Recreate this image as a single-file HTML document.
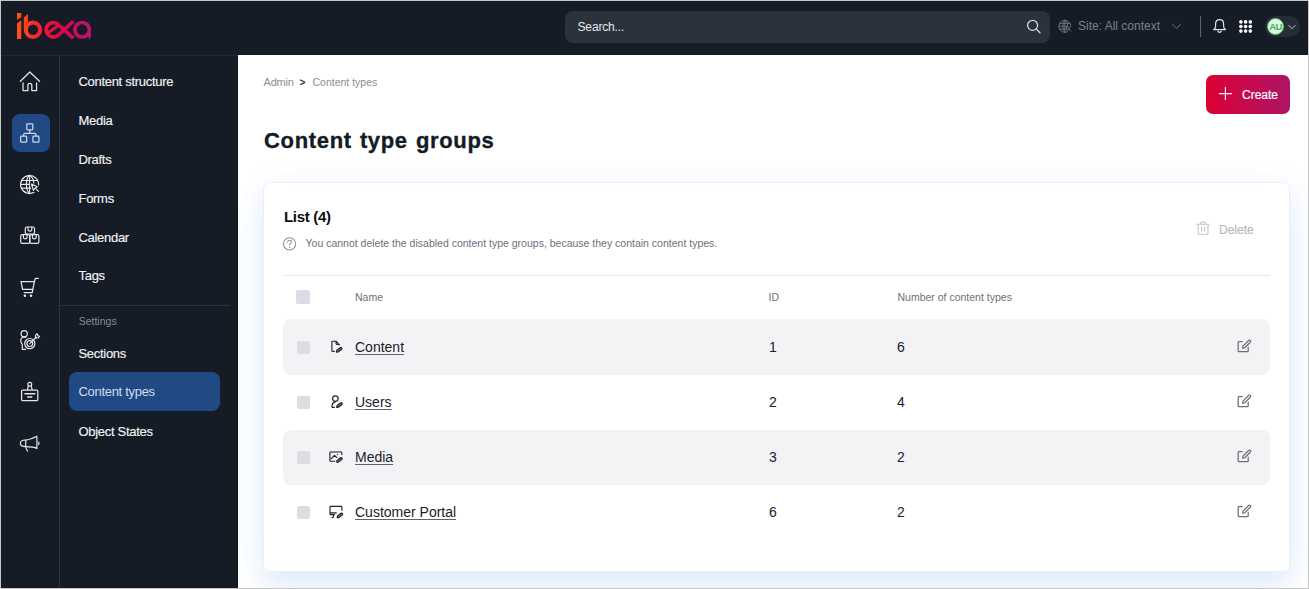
<!DOCTYPE html>
<html><head><meta charset="utf-8">
<style>
*{box-sizing:border-box;margin:0;padding:0}
html,body{width:1309px;height:589px;overflow:hidden;background:#fff}
body{position:relative;font-family:"Liberation Sans",sans-serif}
.a{position:absolute}
.t{position:absolute;white-space:nowrap;font-family:"Liberation Sans",sans-serif}
#frame{left:0;top:0;width:1309px;height:589px;border:1px solid #c6c6c6;z-index:50;pointer-events:none}
#hdr{left:1px;top:1px;width:1307px;height:54px;background:#151c26}
#side1{left:1px;top:55px;width:59px;height:533px;background:#151c26;border-right:1px solid #2b323c}
#side2{left:60px;top:55px;width:178px;height:533px;background:#151c26;border-top:1px solid #232a34;border-right:1px solid #10161d}
#s1top{left:1px;top:55px;width:59px;height:1px;background:#232a34}
#main{left:238px;top:55px;width:1070px;height:533px;background:#fff;overflow:hidden}
.rt{font-size:14px;line-height:14px;color:#1a212b;text-decoration:underline;text-decoration-color:#5d636b;text-underline-offset:2px;text-decoration-thickness:1px}
.rv{font-size:14px;line-height:14px;color:#1a212b}
.mi{font-size:13px;line-height:13px;color:#f2f2f4;letter-spacing:-0.3px;-webkit-text-stroke:0.15px #f2f2f4}
</style></head><body>
<div id="frame" class="a"></div>
<div id="hdr" class="a"></div>
<div id="side1" class="a"></div>
<div id="side2" class="a"></div>
<div id="s1top" class="a"></div>
<div id="main" class="a"></div>

<!-- header -->
<div class="a" style="left:565px;top:11px;width:485px;height:32px;background:#2b323c;border-radius:8px"></div>
<div class="t" style="left:577.5px;top:21px;font-size:12px;line-height:12px;color:#e6e6ea;letter-spacing:-0.15px">Search...</div>
<div class="t" style="left:1078px;top:19.8px;font-size:12px;line-height:12px;color:#7b8087">Site: All context</div>
<div class="a" style="left:1200px;top:16px;width:1px;height:21px;background:#5f656d"></div>
<div class="a" style="left:1265px;top:16px;width:35px;height:21px;background:#262d37;border-radius:11px"></div>
<div class="a" style="left:1267px;top:18px;width:17px;height:17px;background:#e3f6e6;border:1.5px solid #47c263;border-radius:50%"></div>
<div class="t" style="left:1268px;top:22.3px;width:15px;text-align:center;font-size:9.5px;line-height:9.5px;font-weight:700;color:#3ab552;letter-spacing:-0.6px">AU</div>

<!-- sidebar 1 active -->
<div class="a" style="left:12px;top:114px;width:38px;height:38px;background:#214a85;border-radius:8px"></div>

<!-- sidebar 2 -->
<div class="t mi" style="left:78.5px;top:74.5px">Content structure</div>
<div class="t mi" style="left:78.5px;top:113.5px">Media</div>
<div class="t mi" style="left:78.5px;top:152.5px">Drafts</div>
<div class="t mi" style="left:78.5px;top:191.5px">Forms</div>
<div class="t mi" style="left:78.5px;top:230.5px">Calendar</div>
<div class="t mi" style="left:78.5px;top:268.5px">Tags</div>
<div class="a" style="left:60px;top:305px;width:170px;height:1px;background:#2b323c"></div>
<div class="t" style="left:78.7px;top:315.5px;font-size:10.5px;line-height:11px;color:#878b91">Settings</div>
<div class="t mi" style="left:78.5px;top:346.5px">Sections</div>
<div class="a" style="left:69px;top:372.3px;width:151px;height:38.7px;background:#214a85;border-radius:8px"></div>
<div class="t mi" style="left:78.5px;top:384.8px;color:#cfdcf0;-webkit-text-stroke:0">Content types</div>
<div class="t mi" style="left:78.5px;top:424.5px">Object States</div>

<!-- main content -->
<div class="t" style="left:263.5px;top:76.8px;font-size:11px;line-height:11px;color:#8a8e94;letter-spacing:-0.2px">Admin</div>
<div class="t" style="left:299.5px;top:77px;font-size:10px;line-height:11px;font-weight:700;color:#2d3340">&gt;</div>
<div class="t" style="left:312.5px;top:77px;font-size:10.5px;line-height:11px;color:#8a8e94">Content types</div>
<div class="t" style="left:264px;top:130.1px;font-size:22px;line-height:22px;font-weight:700;color:#131c26;letter-spacing:0.66px;word-spacing:1.4px;-webkit-text-stroke:0.35px #131c26">Content type groups</div>

<div class="a" style="left:1206px;top:75px;width:84px;height:38.5px;border-radius:7px;background:linear-gradient(90deg,#dc0035,#ad1565)"></div>
<div class="t" style="left:1242px;top:89px;font-size:12px;line-height:12px;color:#fff;-webkit-text-stroke:0.2px #fff">Create</div>

<!-- card -->
<div class="a" style="left:263px;top:182px;width:1027px;height:390px;background:#fff;border:1px solid #eceef4;border-radius:7px;box-shadow:0 18px 30px rgba(60,135,240,0.13),0 0 28px rgba(60,135,240,0.06)"></div>
<div class="t" style="left:284px;top:208.6px;font-size:15px;line-height:15px;font-weight:700;color:#0c0f14;letter-spacing:-0.3px">List (4)</div>
<div class="t" style="left:305.5px;top:238px;font-size:10.5px;line-height:11px;color:#6c7178">You cannot delete the disabled content type groups, because they contain content types.</div>
<div class="t" style="left:1219px;top:223.6px;font-size:12px;line-height:12px;color:#b5b8bd;-webkit-text-stroke:0.15px #b5b8bd">Delete</div>
<div class="a" style="left:283px;top:275px;width:987px;height:1px;background:#e6e7eb"></div>

<div class="a" style="left:296px;top:290px;width:14px;height:14px;background:#dcdce5;border-radius:2px"></div>
<div class="t" style="left:355px;top:292px;font-size:10.5px;line-height:11px;color:#6c7178">Name</div>
<div class="t" style="left:768.5px;top:292px;font-size:10.5px;line-height:11px;color:#6c7178">ID</div>
<div class="t" style="left:897.5px;top:292px;font-size:10.5px;line-height:11px;color:#6c7178">Number of content types</div>

<!-- rows -->
<div class="a" style="left:283px;top:319px;width:987px;height:55.5px;background:#f3f3f5;border-radius:8px"></div>
<div class="a" style="left:283px;top:429.5px;width:987px;height:55px;background:#f3f3f5;border-radius:8px"></div>
<!-- row content -->
<div class="a" style="left:296.5px;top:340.5px;width:13.5px;height:13.5px;background:#dcdce5;border-radius:2px"></div>
<div class="t rt" style="left:355px;top:340px">Content</div>
<div class="t rv" style="left:769px;top:340px">1</div>
<div class="t rv" style="left:897px;top:340px">6</div>
<div class="a" style="left:296.5px;top:395.5px;width:13.5px;height:13.5px;background:#dcdce5;border-radius:2px"></div>
<div class="t rt" style="left:355px;top:395px">Users</div>
<div class="t rv" style="left:769px;top:395px">2</div>
<div class="t rv" style="left:897px;top:395px">4</div>
<div class="a" style="left:296.5px;top:450.5px;width:13.5px;height:13.5px;background:#dcdce5;border-radius:2px"></div>
<div class="t rt" style="left:355px;top:450px">Media</div>
<div class="t rv" style="left:769px;top:450px">3</div>
<div class="t rv" style="left:897px;top:450px">2</div>
<div class="a" style="left:296.5px;top:505.5px;width:13.5px;height:13.5px;background:#dcdce5;border-radius:2px"></div>
<div class="t rt" style="left:355px;top:505px">Customer Portal</div>
<div class="t rv" style="left:769px;top:505px">6</div>
<div class="t rv" style="left:897px;top:505px">2</div>
<svg class="a" style="left:0;top:0;z-index:20" width="1309" height="589" viewBox="0 0 1309 589">
<defs>
<linearGradient id="lg" gradientUnits="userSpaceOnUse" x1="17" y1="0" x2="91" y2="0">
<stop offset="0" stop-color="#ff5214"/><stop offset="0.38" stop-color="#f2153a"/><stop offset="0.6" stop-color="#dc0548"/><stop offset="1" stop-color="#b91470"/>
</linearGradient>
</defs>
<!-- logo -->
<defs><clipPath id="cx"><rect x="40" y="20.6" width="60" height="18.3"/></clipPath></defs>
<g fill="url(#lg)" stroke="none">
<polygon points="17,13.1 21.3,13.1 21.3,17.2 17,19.7"/>
<polygon points="17,23.4 21.3,20.3 21.3,39 17,39"/>
<polygon points="23.75,17.6 27.95,13.8 27.95,29.8 23.75,29.8"/>
</g>
<g fill="none" stroke="url(#lg)" stroke-width="4.1">
<circle cx="33" cy="29.75" r="7.2"/>
</g>
<g fill="none" stroke="url(#lg)" clip-path="url(#cx)">
<path d="M59 25.1 A7.25 7.25 0 1 0 58.6 34.9 L73.4 21.2" stroke-width="3.7"/>
<path d="M59.3 24.8 L47.9 32.9" stroke-width="3.1"/>
<path d="M59.6 25.6 L73.4 38.4" stroke-width="3.7"/>
<circle cx="82.1" cy="29.75" r="7.25" stroke-width="3.7"/>
</g>
<path d="M88 34.5 L90.9 32 L90.9 36.5 L89 39.9 Z" fill="url(#lg)"/>

<!-- sidebar icons -->
<g fill="none" stroke="#e6e6e8" stroke-width="1.25" stroke-linecap="round" stroke-linejoin="round">
<path d="M20.4 81.3 L29.8 72 L39.5 81.3"/>
<path d="M23 82.9 V90.5 H27.9 V85.3 A1.95 1.95 0 0 1 31.8 85.3 V90.5 H36.6 V82.9"/>
</g>
<g fill="none" stroke="#c9d7ee" stroke-width="1.25" stroke-linecap="round" stroke-linejoin="round">
<rect x="26.8" y="123.9" width="6" height="6" rx="0.8"/>
<path d="M29.75 129.9 V133.3 M23.65 136.2 V134.6 Q23.65 133.3 24.9 133.3 H34.6 Q35.9 133.3 35.9 134.6 V136.2"/>
<rect x="20.65" y="136.2" width="6" height="6" rx="0.8"/>
<rect x="32.9" y="136.2" width="6" height="6" rx="0.8"/>
</g>
<g fill="none" stroke="#e6e6e8" stroke-width="1.2" stroke-linecap="round" stroke-linejoin="round">
<path d="M34.1 192.3 A9 9 0 1 1 38.6 184.9"/>
<path d="M29.6 175.3 C25.4 178 25.4 190.6 29.6 193.3 M29.6 175.3 C33.6 178 33.9 182 33.7 184.3"/>
<path d="M29.6 175.3 V193.3"/>
<path d="M21.6 180.5 H37.6 M20.6 184.3 H30.5 M21.6 188.1 H31.5"/>
<path d="M31.4 184 L37.3 186.8 L35.2 188 L33.4 190.4 Z M35.3 188.1 L38.5 191.4" stroke="#151c26" stroke-width="3" fill="#151c26"/><path d="M31.4 184 L37.3 186.8 L35.2 188 L33.4 190.4 Z M35.3 188.1 L38.5 191.4"/>
</g>
<g fill="none" stroke="#e6e6e8" stroke-width="1.2" stroke-linecap="round" stroke-linejoin="round">
<rect x="25.3" y="227" width="9.2" height="7" rx="1.6"/>
<path d="M28 227 V229.6 Q28 231.2 29.9 231.2 Q31.8 231.2 31.8 229.6 V227"/>
<rect x="20.7" y="234.6" width="9.1" height="8.8" rx="1.6"/>
<path d="M23.4 234.6 V237.2 Q23.4 238.8 25.25 238.8 Q27.1 238.8 27.1 237.2 V234.6"/>
<rect x="29.8" y="234.6" width="9.1" height="8.8" rx="1.6"/>
<path d="M32.5 234.6 V237.2 Q32.5 238.8 34.35 238.8 Q36.2 238.8 36.2 237.2 V234.6"/>
</g>
<g fill="none" stroke="#e6e6e8" stroke-width="1.25" stroke-linecap="round" stroke-linejoin="round">
<path d="M21 281.7 H34.4 L32.8 289.3 H22.6 Z"/>
<path d="M34.4 281.7 L35.1 279 Q35.3 278.4 36 278.4 H38.3"/>
<path d="M32.8 289.3 L32.2 292.6 H24.2"/>
</g>
<circle cx="24.9" cy="295.7" r="1.3" fill="#e6e6e8"/><circle cx="31" cy="295.7" r="1.3" fill="#e6e6e8"/>
<g fill="none" stroke="#e6e6e8" stroke-width="1.2" stroke-linecap="round" stroke-linejoin="round">
<circle cx="24.2" cy="333.7" r="3.1"/>
<path d="M22.6 337.3 Q20.6 338.5 20.7 340.5 Q20.8 342.6 22.3 344.3 V349.4 H25.6 M23.2 337.2 H26"/>
<circle cx="29.8" cy="343.6" r="5.1"/>
<circle cx="29.8" cy="343.6" r="2.9"/>
<path d="M29.8 343.6 L36.3 337.1"/>
<path d="M35.4 338 L35.6 335.2 L37.1 333.7 L37.9 335.7 L39.5 336.3 L38.2 337.8 Z"/>
</g>
<g fill="none" stroke="#e6e6e8" stroke-width="1.25" stroke-linecap="round" stroke-linejoin="round">
<rect x="21.6" y="390" width="16.2" height="10.6" rx="1"/>
<path d="M24.9 393.8 H34.8 M27.7 396.9 H31.8" stroke-width="1.5"/>
<circle cx="29.8" cy="384.3" r="1.9"/>
<path d="M28.4 385.8 L27.5 389.6 M31.2 385.8 L32.1 389.6"/>
</g>
<g fill="none" stroke="#e6e6e8" stroke-width="1.2" stroke-linecap="round" stroke-linejoin="round">
<path d="M25.7 440 C29.3 440 33 438.2 36.9 436.3 V448.4 C33 446.5 29.3 446.6 25.7 446.6"/>
<path d="M25.7 440 C22 440 20.3 441.5 20.3 443.3 C20.3 445.1 22 446.6 25.7 446.6"/>
<path d="M25.7 440 V446.8 Q26 449.4 27.6 451"/>
</g>
<rect x="37.9" y="441.6" width="1.6" height="3.4" fill="#b9b9bc"/>

<!-- header icons -->
<g fill="none" stroke="#d6d7db" stroke-width="1.3" stroke-linecap="round">
<circle cx="1032.6" cy="25.3" r="5"/>
<path d="M1036.3 29 L1040 32.7"/>
</g>
<g fill="none" stroke="#6c7178" stroke-width="1" stroke-linecap="round" stroke-linejoin="round">
<path d="M1067.5 31.8 A6 6 0 1 1 1070.9 26.6"/>
<path d="M1064.9 20.2 C1062.2 22 1062.2 30.4 1064.9 32.2 M1064.9 20.2 C1067.4 22 1067.7 24.5 1067.6 26.2 M1064.9 20.2 V32.2"/>
<path d="M1059.6 23.4 H1070 M1058.9 26.2 H1065.6 M1059.6 29 H1066.3"/>
<path d="M1066.4 26.3 L1069.9 28 L1068.7 28.8 L1067.6 30.3 Z M1068.8 28.9 L1070.9 31"/>
<path d="M1172.4 24.1 L1176.6 28.3 L1180.8 24.1"/>
</g>
<g fill="none" stroke="#e2e2e6" stroke-width="1.2" stroke-linejoin="round" stroke-linecap="round">
<path d="M1213.7 29.6 H1225.5 Q1223.8 28.7 1223.6 26.2 V24.1 Q1223.6 19.7 1219.6 19.7 Q1215.6 19.7 1215.6 24.1 V26.2 Q1215.4 28.7 1213.7 29.6 Z"/>
<path d="M1218 31.3 Q1219.6 33.3 1221.2 31.3"/>
</g>
<g fill="#ffffff">
<circle cx="1240.9" cy="21.9" r="1.8"/><circle cx="1245.6" cy="21.9" r="1.8"/><circle cx="1250.3" cy="21.9" r="1.8"/>
<circle cx="1240.9" cy="26.5" r="1.8"/><circle cx="1245.6" cy="26.5" r="1.8"/><circle cx="1250.3" cy="26.5" r="1.8"/>
<circle cx="1240.9" cy="31.1" r="1.8"/><circle cx="1245.6" cy="31.1" r="1.8"/><circle cx="1250.3" cy="31.1" r="1.8"/>
</g>
<path d="M1288.6 25.4 L1291.9 28.7 L1295.2 25.4" fill="none" stroke="#8a8f96" stroke-width="1.1" stroke-linecap="round" stroke-linejoin="round"/>

<!-- create plus -->
<path d="M1218.9 93.6 H1231.9 M1225.4 87.1 V100.1" stroke="#fff" stroke-width="1.1" fill="none"/>

<!-- delete -->
<g fill="none" stroke="#c3c5ca" stroke-width="1.1" stroke-linecap="round" stroke-linejoin="round">
<path d="M1196.7 224.3 H1209 M1200.7 224.3 V223.1 Q1200.7 222 1201.8 222 H1204.3 Q1205.4 222 1205.4 223.1 V224.3"/>
<path d="M1198.2 224.6 V233 Q1198.2 234.3 1199.5 234.3 H1206.7 Q1208 234.3 1208 233 V224.6"/>
<path d="M1201.7 227.4 V231.3 M1204.5 227.4 V231.3"/>
</g>
<!-- question -->
<circle cx="289.6" cy="243.9" r="6.1" fill="none" stroke="#8b8f95" stroke-width="1.05"/>
<path d="M287.6 242.2 Q287.7 240.3 289.6 240.3 Q291.5 240.3 291.5 242 Q291.5 243.2 290.2 243.8 Q289.6 244.1 289.6 245.2" fill="none" stroke="#8b8f95" stroke-width="1.05" stroke-linecap="round"/>
<circle cx="289.6" cy="247.4" r="0.65" fill="#8b8f95"/>
<g fill="none" stroke="#1d232b" stroke-width="1.15" stroke-linecap="round" stroke-linejoin="round">
<path d="M336 341.2 H332.6 Q331.9 341.2 331.9 341.9 V350.6 Q331.9 351.3 332.6 351.3 H334.3 M336 341.2 L339.4 344.8 M336.1 341.4 V343.6 Q336.1 344.5 337 344.5 H339.2"/>
</g>
<path d="M336.3 352.2 L336.8 350.3 L340.2 347.7 Q341.1 347.1 341.8 347.9 Q342.3 348.8 341.4 349.5 L338.1 352.0 Z" fill="#6a7078" stroke="#1d232b" stroke-width="1.1" stroke-linejoin="round"/>
<g fill="none" stroke="#1d232b" stroke-width="1.15" stroke-linecap="round" stroke-linejoin="round">
<circle cx="335.4" cy="398.6" r="2.8"/><path d="M335.2 401.9 Q332.3 402.8 332.1 405.2 L332 407.3 H334.5"/></g>
<path d="M336.6 407.4 L337.1 405.5 L340.5 402.9 Q341.4 402.3 342.1 403.1 Q342.6 404.0 341.7 404.7 L338.4 407.2 Z" fill="#6a7078" stroke="#1d232b" stroke-width="1.1" stroke-linejoin="round"/>
<g fill="none" stroke="#1d232b" stroke-width="1.15" stroke-linecap="round" stroke-linejoin="round">
<path d="M334.8 461.2 H330.5 Q329.9 461.2 329.9 460.5 V452.7 Q329.9 452 330.6 452 H341.1 Q341.8 452 341.8 452.7 V454.4 M331.3 458.6 L334.5 455.3 L336.6 457.4"/></g>
<circle cx="337.4" cy="454.6" r="0.6" fill="#1d232b"/>
<path d="M336.6 462.3 L337.1 460.4 L340.5 457.8 Q341.4 457.2 342.1 458.0 Q342.6 458.9 341.7 459.6 L338.4 462.1 Z" fill="#6a7078" stroke="#1d232b" stroke-width="1.1" stroke-linejoin="round"/>
<g fill="none" stroke="#1d232b" stroke-width="1.15" stroke-linecap="round" stroke-linejoin="round">
<path d="M334.6 514.6 H330.7 Q330 514.6 330 513.9 V507.1 Q330 506.4 330.7 506.4 H341.2 Q341.9 506.4 341.9 507.1 V510.3 M330.3 512.9 H336.3 M333.6 515 L333.2 517.5 H331.9"/></g>
<path d="M337.1 517.8 L337.6 515.9 L341.0 513.3 Q341.9 512.7 342.6 513.5 Q343.1 514.4 342.2 515.1 L338.9 517.6 Z" fill="#6a7078" stroke="#1d232b" stroke-width="1.1" stroke-linejoin="round"/>
<g fill="none" stroke="#6b7078" stroke-width="1.25" stroke-linecap="round" stroke-linejoin="round"><path d="M1242.2 341.7 H1239 Q1238.2 341.7 1238.2 342.5 V350.9 Q1238.2 351.7 1239 351.7 H1247.4 Q1248.2 351.7 1248.2 350.9 V347.2"/><path d="M1243 346.1 L1248.6 340.5 Q1249.5 339.7 1250.3 340.5 Q1251.1 341.3 1250.3 342.2 L1244.7 347.8 L1242.6 348.2 Z"/></g>
<g fill="none" stroke="#6b7078" stroke-width="1.25" stroke-linecap="round" stroke-linejoin="round"><path d="M1242.2 396.7 H1239 Q1238.2 396.7 1238.2 397.5 V405.9 Q1238.2 406.7 1239 406.7 H1247.4 Q1248.2 406.7 1248.2 405.9 V402.2"/><path d="M1243 401.1 L1248.6 395.5 Q1249.5 394.7 1250.3 395.5 Q1251.1 396.3 1250.3 397.2 L1244.7 402.8 L1242.6 403.2 Z"/></g>
<g fill="none" stroke="#6b7078" stroke-width="1.25" stroke-linecap="round" stroke-linejoin="round"><path d="M1242.2 451.7 H1239 Q1238.2 451.7 1238.2 452.5 V460.9 Q1238.2 461.7 1239 461.7 H1247.4 Q1248.2 461.7 1248.2 460.9 V457.2"/><path d="M1243 456.1 L1248.6 450.5 Q1249.5 449.7 1250.3 450.5 Q1251.1 451.3 1250.3 452.2 L1244.7 457.8 L1242.6 458.2 Z"/></g>
<g fill="none" stroke="#6b7078" stroke-width="1.25" stroke-linecap="round" stroke-linejoin="round"><path d="M1242.2 506.7 H1239 Q1238.2 506.7 1238.2 507.5 V515.9 Q1238.2 516.7 1239 516.7 H1247.4 Q1248.2 516.7 1248.2 515.9 V512.2"/><path d="M1243 511.1 L1248.6 505.5 Q1249.5 504.7 1250.3 505.5 Q1251.1 506.3 1250.3 507.2 L1244.7 512.8 L1242.6 513.2 Z"/></g>
</svg>
</body></html>
